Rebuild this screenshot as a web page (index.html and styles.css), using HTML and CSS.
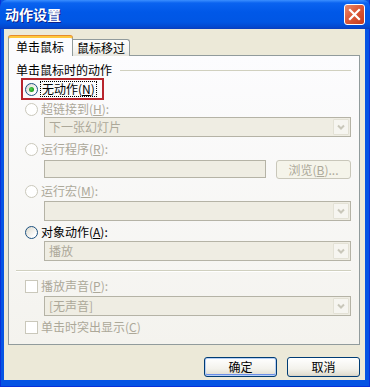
FILE: index.html
```html
<!DOCTYPE html>
<html lang="zh-CN">
<head>
    <meta charset="UTF-8">
    <title>动作设置</title>
    <link rel="stylesheet" href="styles.css">
</head>
<body>
    <div class="window">
        <!-- Title bar -->
        <div class="titlebar">
            <span class="title">动作设置</span>
            <span class="close-btn">
                <svg width="13" height="13" viewBox="0 0 13 13">
                    <path d="M2 2 L11 11 M11 2 L2 11" stroke="#fff" stroke-width="2.2" stroke-linecap="square"/>
                </svg>
            </span>
        </div>

        <div class="client">
            <div class="tabs">
                <div class="tab active">单击鼠标</div>
                <div class="tab">鼠标移过</div>
            </div>

            <div class="panel">
                <div class="group-title"><span>单击鼠标时的动作</span></div>

                <div class="highlight">
                    <div class="option">
                        <span class="radio checked"></span>
                        <span class="focus">无动作(<u>N</u>)</span>
                    </div>
                </div>

                <div class="option indent disabled mt2">
                    <span class="radio"></span>超链接到(<u>H</u>):
                </div>
                <div class="combo mt1">
                    <span class="combo-text">下一张幻灯片</span>
                    <span class="combo-arrow"></span>
                </div>

                <div class="option indent disabled mt5">
                    <span class="radio"></span>运行程序(<u>R</u>):
                </div>
                <div class="text-row mt4">
                    <div class="textbox"></div>
                    <div class="btn-browse">浏览(<u>B</u>)...</div>
                </div>

                <div class="option indent disabled mt5">
                    <span class="radio"></span>运行宏(<u>M</u>):
                </div>
                <div class="combo mt3">
                    <span class="combo-text"></span>
                    <span class="combo-arrow"></span>
                </div>

                <div class="option indent mt4">
                    <span class="radio on"></span>对象动作(<u>A</u>):
                </div>
                <div class="combo mt2">
                    <span class="combo-text">播放</span>
                    <span class="combo-arrow"></span>
                </div>

                <div class="separator"></div>

                <div class="option indent disabled mt7">
                    <span class="check"></span>播放声音(<u>P</u>):
                </div>
                <div class="combo mt3">
                    <span class="combo-text">[无声音]</span>
                    <span class="combo-arrow"></span>
                </div>

                <div class="option indent disabled mt4">
                    <span class="check"></span>单击时突出显示(<u>C</u>)
                </div>
            </div>

            <div class="buttons">
                <div class="btn default">确定</div>
                <div class="btn">取消</div>
            </div>
        </div>
    </div>
</body>
</html>
```

FILE: styles.css
```css
body {
    margin: 0;
    font-family: "Noto Sans CJK SC", "DejaVu Sans", sans-serif;
    font-size: 12px;
    background: #ffffff;
}

/* Window frame */
.window {
    width: 370px;
    height: 387px;
    box-sizing: border-box;
    display: flex;
    flex-direction: column;
    background: #0554e4;
    border: 1px solid #0831d9;
    border-top: none;
}

.titlebar {
    height: 29px;
    flex: none;
    display: flex;
    align-items: center;
    padding-left: 5px;
    margin: 0 -1px;
    background: linear-gradient(#3b8fff 0, #0a63f0 3px, #0058e8 12px, #0056e4 22px, #0348cf 27px, #0a3dbb 29px);
    border-radius: 7px 7px 0 0;
}

.title {
    color: #ffffff;
    font-weight: bold;
    font-size: 14px;
    letter-spacing: 0;
    text-shadow: 1px 1px #0f1f89;
    margin-top: -1px;
}

.close-btn {
    margin-left: auto;
    margin-right: 5px;
    width: 19px;
    height: 19px;
    border: 1px solid #ffffff;
    border-radius: 3px;
    background: linear-gradient(135deg, #ea8b6d 0, #dc5a3a 45%, #c43a1c 100%);
    display: flex;
    align-items: center;
    justify-content: center;
}

.client {
    flex: 1;
    margin: 0 4px 6px 3px;
    background: #ece9d8;
    padding: 7px 5px 0 4px;
}

/* Tabs */
.tabs {
    display: flex;
    align-items: flex-end;
    height: 20px;
    position: relative;
    z-index: 1;
    margin-bottom: -1px;
}

.tab {
    height: 16px;
    line-height: 16px;
    padding: 0 4px;
    border: 1px solid #919b9c;
    border-bottom: none;
    border-left: none;
    border-radius: 0 3px 0 0;
    background: linear-gradient(#ffffff, #f3f3ef 70%, #e6e5de);
    box-sizing: content-box;
}

.tab.active {
    height: 17px;
    line-height: 18px;
    padding: 0 8px 1px 7px;
    border-left: 1px solid #919b9c;
    border-top: 2px solid #ffc83c;
    border-radius: 3px 3px 0 0;
    background: #fcfcfe;
    box-shadow: 0 -1px 0 #e68b2c;
}

/* Tab panel */
.panel {
    height: 290px;
    box-sizing: border-box;
    border: 1px solid #919b9c;
    background: linear-gradient(#fcfcfe, #f4f3ee);
    padding: 8px 8px 0 7px;
}

.group-title {
    display: flex;
    align-items: center;
    height: 12px;
    line-height: 12px;
    gap: 8px;
}

.group-title::after {
    content: "";
    flex: 1;
    border-top: 1px solid #d0d0bf;
}

.highlight {
    margin: 2px 0 0 5px;
    width: 77px;
    height: 18px;
    border: 2px solid #b8252d;
    padding: 0 0 0 2px;
    display: flex;
    align-items: center;
}

.option {
    display: flex;
    align-items: center;
    height: 14px;
    line-height: 14px;
    white-space: nowrap;
}

.option.indent {
    margin-left: 9px;
}

.option.disabled {
    color: #aca899;
}

.focus {
    outline: 1px dotted #000000;
    outline-offset: 0;
    line-height: 14px;
    padding: 0 1px;
}

.radio {
    width: 11px;
    height: 11px;
    border: 1px solid #cac8bb;
    border-radius: 50%;
    background: #ffffff;
    margin-right: 3px;
    flex: none;
    position: relative;
}

.radio.on,
.radio.checked {
    border-color: #1c5180;
    background: linear-gradient(135deg, #dcd9cd, #ffffff 80%);
}

.radio.checked::after {
    content: "";
    position: absolute;
    left: 3px;
    top: 3px;
    width: 5px;
    height: 5px;
    border-radius: 50%;
    background: radial-gradient(circle at 40% 40%, #55d255, #21a121 60%, #1a8a1a);
}

.check {
    width: 11px;
    height: 11px;
    border: 1px solid #cac8bb;
    background: #ffffff;
    margin-right: 3px;
    flex: none;
}

/* Disabled combo boxes */
.combo {
    margin-left: 28px;
    height: 20px;
    box-sizing: border-box;
    border: 1px solid #b5b3a6;
    background: #efede3;
    display: flex;
    align-items: center;
    color: #aca899;
}

.combo-text {
    flex: 1;
    padding-left: 4px;
    line-height: 18px;
}

.combo-arrow {
    width: 14px;
    height: 14px;
    margin-right: 1px;
    border: 1px solid #e3e1d5;
    border-radius: 1px;
    background: #f6f5f0 url("data:image/svg+xml;utf8,<svg xmlns='http://www.w3.org/2000/svg' width='14' height='14'><path d='M4 5.5 L7 8.5 L10 5.5' fill='none' stroke='%23c9c7ba' stroke-width='2'/></svg>") no-repeat center;
}

.text-row {
    margin-left: 28px;
    display: flex;
    gap: 10px;
    height: 19px;
}

.textbox {
    width: 222px;
    height: 18px;
    box-sizing: border-box;
    border: 1px solid #b5b3a6;
    background: #efede3;
}

.btn-browse {
    flex: 1;
    box-sizing: border-box;
    border: 1px solid #c9c7ba;
    border-radius: 3px;
    background: #f5f4ea;
    color: #aca899;
    text-align: center;
    line-height: 17px;
}

.separator {
    margin: 9px 0 0 0;
    height: 0;
    border-top: 1px solid #d0d0bf;
    border-bottom: 1px solid #ffffff;
}

.mt1 { margin-top: 1px; }
.mt2 { margin-top: 2px; }
.mt3 { margin-top: 3px; }
.mt4 { margin-top: 4px; }
.mt5 { margin-top: 5px; }
.mt7 { margin-top: 7px; }

/* Bottom buttons */
.buttons {
    display: flex;
    justify-content: flex-end;
    gap: 10px;
    margin-top: 12px;
}

.btn {
    width: 73px;
    height: 20px;
    box-sizing: border-box;
    border: 1px solid #003c74;
    border-radius: 3px;
    background: linear-gradient(#ffffff, #f3f2ec 60%, #e3e0d4 90%, #d6d0c5);
    text-align: center;
    line-height: 18px;
}

.btn.default {
    box-shadow: inset 0 0 0 1px #b6cff5, inset 0 -1px 0 1px #6a8ee8;
}
```
